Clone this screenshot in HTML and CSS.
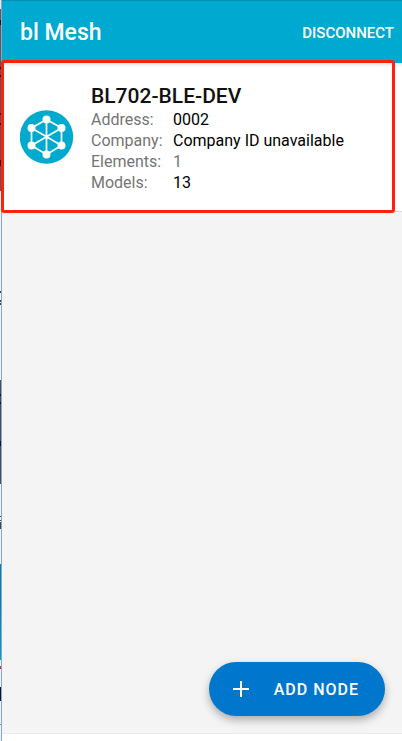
FILE: index.html
```html
<!DOCTYPE html>
<html lang="en">
<head>
<meta charset="utf-8">
<meta name="viewport" content="width=device-width, initial-scale=1">
<title>bl Mesh</title>
<link rel="stylesheet" href="styles.css">
</head>
<body>
<div class="edge"></div>
<div class="app">
  <header class="bar">
    <h1 class="bar-title">bl Mesh</h1>
    <button class="bar-action" type="button">DISCONNECT</button>
  </header>
  <main class="content">
    <article class="node">
      <svg class="node-icon" viewBox="0 0 54 54" aria-hidden="true">
        <circle cx="26.500" cy="27" r="26.700" fill="#00a9ce"/>
        <g fill="none" stroke="#fff" stroke-width="1.700">
          <path d="M26.500 9.500 41.500 18v17.500L26.500 44.500 11.500 35.500V18z"/>
          <path d="M26.500 9.500v35M11.500 18l30 17.500M41.500 18 11.500 35.500"/>
        </g>
        <g fill="#fff">
          <circle cx="26.500" cy="9.500" r="4"/>
          <circle cx="41.500" cy="18" r="4"/>
          <circle cx="41.500" cy="35.500" r="4"/>
          <circle cx="26.500" cy="44.500" r="4"/>
          <circle cx="11.500" cy="35.500" r="4"/>
          <circle cx="11.500" cy="18" r="4"/>
          <circle cx="26.500" cy="27" r="1.800"/>
        </g>
      </svg>
      <div class="node-body">
        <h2 class="node-name">BL702-BLE-DEV</h2>
        <dl class="facts">
          <dt>Address:</dt><dd>0002</dd>
          <dt>Company:</dt><dd>Company ID unavailable</dd>
          <dt>Elements:</dt><dd class="muted">1</dd>
          <dt>Models:</dt><dd>13</dd>
        </dl>
      </div>
      <div class="highlight"></div>
    </article>
    <button class="add" type="button">
      <svg class="add-icon" viewBox="0 0 16 16" aria-hidden="true"><path d="M8 0v16M0 8h16" stroke="#fff" stroke-width="2"/></svg>
      ADD NODE
    </button>
  </main>
  <footer class="foot"></footer>
</div>
</body>
</html>
```
FILE: styles.css
```css
* { box-sizing: border-box; }

body {
  margin: 0;
  min-height: 100vh;
  display: flex;
  background: #f4f4f4;
  color: #000;
  font-family: Roboto, "Liberation Sans", sans-serif;
}

h1, h2, dl, dd { margin: 0; }

button {
  border: 0;
  color: #fff;
  font-family: inherit;
  font-weight: 500;
  cursor: pointer;
}

/* Sliver of the window behind the app */
.edge {
  flex: 0 0 2px;
  border-right: 1px solid #8ba6cf;
  background: linear-gradient(
    #e4e7ec 9px, #59595c 9px 20px, #17171b 20px 25px, #59595c 25px 67px,
    #222226 67px 69px, #59595c 69px 75px, #222226 75px 77px, #59595c 77px 113px,
    #222226 113px 115px, #59595c 115px 123px, #222226 123px 125px, #59595c 125px 160px,
    #17171b 160px 166px, #59595c 166px 191px, #f2f2f2 191px 291px,
    #44444c 291px 293px, #f2f2f2 293px 300px, #44444c 300px 302px, #f2f2f2 302px 303px,
    #44444c 303px 305px, #f2f2f2 305px 380px, #4d4d52 380px 394px, #17171b 394px 396px,
    #4d4d52 396px 402px, #17171b 402px 404px, #4d4d52 404px 441px, #17171b 441px 446px,
    #4d4d52 446px 484px, #f2f2f2 484px 516px, #44444c 516px 517px, #f2f2f2 517px 520px,
    #44444c 520px 521px, #f2f2f2 521px 522px, #44444c 522px 529px, #f2f2f2 529px 564px,
    #067fa2 564px 595px, #0a9cc0 660px, #f2f2f2 660px 666px, #f52525 666px 669px,
    #f2f2f2 669px 687px, #14141e 687px 701px, #f2f2f2 701px 724px, #88888c 724px 725px, #f2f2f2 725px);
}

.app {
  flex: 1;
  min-width: 0;
  display: flex;
  flex-direction: column;
}

.bar {
  height: 63px;
  padding: 2px 8px 0 18px;
  display: flex;
  align-items: center;
  justify-content: space-between;
  border-top: 1px solid #078fb0;
  background: #00a9d0;
}

.bar-title {
  color: #fff;
  font-size: 23px;
  font-weight: 500;
  line-height: 28px;
}

.bar-action {
  padding: 0;
  background: none;
  font-size: 15px;
}

.content {
  flex: 1;
  display: flex;
  flex-direction: column;
}

.node {
  position: relative;
  padding: 20px 18px 18px;
  display: flex;
  align-items: flex-start;
  gap: 17px;
  border-bottom: 1px solid #dadada;
  background: linear-gradient(#ececec, #fff 5px);
}

.node-icon {
  flex: 0 0 54px;
  height: 54px;
  margin-top: 27px;
}

.node-name {
  color: #111;
  font-size: 21px;
  font-weight: 500;
  line-height: 26px;
}

.facts {
  display: grid;
  grid-template-columns: 82px 1fr;
  font-size: 16px;
  line-height: 21px;
}

.facts dt, .facts .muted { color: #757575; }

.highlight {
  position: absolute;
  inset: -3px 7px -2px -1px;
  border: 3px solid #ff2010;
  border-radius: 3px;
  pointer-events: none;
}

.add {
  height: 54px;
  margin: auto 17px 17px auto;
  padding: 0 26px 0 24px;
  display: flex;
  align-items: center;
  gap: 25px;
  border-radius: 27px;
  background: #0077cc;
  box-shadow: 0 4px 8px rgba(0, 0, 0, .3);
  font-size: 16px;
  letter-spacing: 1px;
}

.add-icon { width: 16px; height: 16px; }

.foot {
  height: 8px;
  border-top: 1px solid #ececec;
  background: #fff;
}
```
